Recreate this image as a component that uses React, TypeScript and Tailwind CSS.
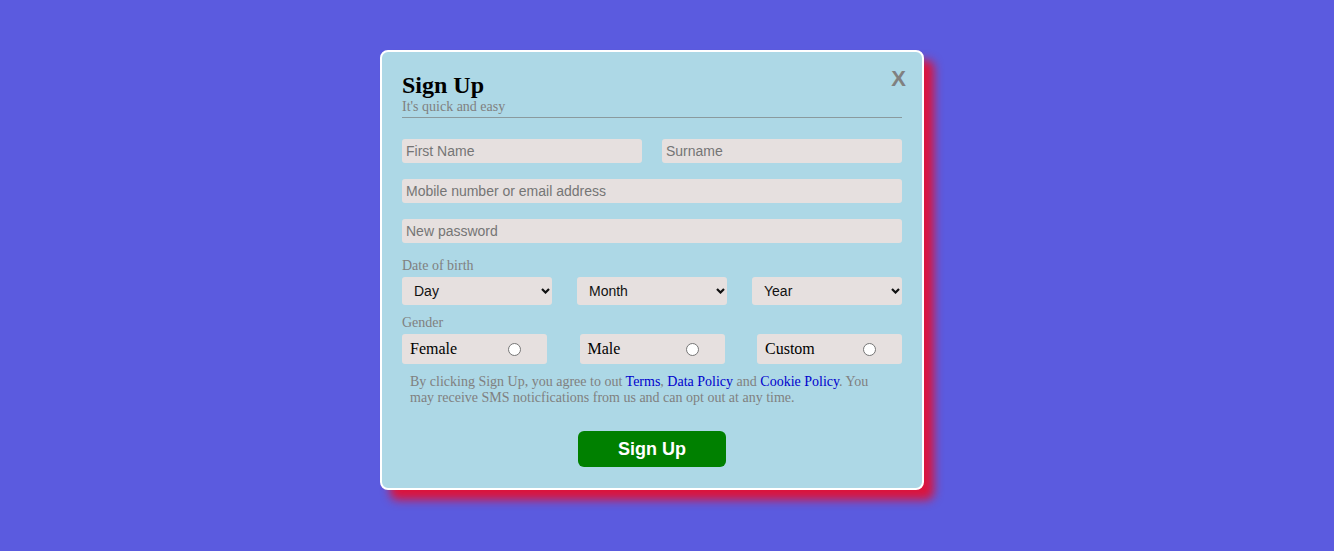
import React from "react";

const Chevron = () => (
  <svg
    className="pointer-events-none absolute right-[2px] top-1/2 -translate-y-1/2"
    width="9"
    height="6"
    viewBox="0 0 9 6"
  >
    <path d="M1 1 L4.5 4.5 L8 1" stroke="#111" strokeWidth="2.2" fill="none" />
  </svg>
);

function Select({ label }: { label: string }) {
  return (
    <div className="relative w-[150px] h-[28px]">
      <select
        className="appearance-none w-full h-full rounded-[3px] bg-[#e6e0df] pl-[12px] text-[14px] text-[#111] outline-none"
        style={{ fontFamily: '"Liberation Sans", Arial, sans-serif' }}
        defaultValue={label}
      >
        <option>{label}</option>
      </select>
      <Chevron />
    </div>
  );
}

function Gender({ label }: { label: string }) {
  return (
    <label className="flex h-[30px] w-[145px] items-center justify-between rounded-[3px] bg-[#e6e0df] pl-[8px] pr-[26px] text-[16px] text-black">
      <span>{label}</span>
      <span className="block h-[13px] w-[13px] rounded-full border border-[#767676] bg-white" />
    </label>
  );
}

export default function App() {
  const sans = { fontFamily: '"Liberation Sans", Arial, sans-serif' };
  return (
    <div
      className="min-h-[551px] w-full bg-[#5b5bdf] flex pl-[380px] pt-[50px]"
      style={{ fontFamily: '"Liberation Serif", "Times New Roman", serif' }}
    >
      <div className="w-[544px] h-[440px] rounded-[8px] border-2 border-white bg-[#add8e6] p-[20px] shadow-[10px_10px_10px_#dc143c] flex flex-col">
        <div className="flex justify-between">
          <div>
            <h2 className="text-[24px] leading-[27px] font-bold text-black">Sign Up</h2>
            <p className="text-[14px] leading-[16px] text-[#808080]">It's quick and easy</p>
          </div>
          <span
            className="-mr-[4px] mt-[-7px] text-[22px] leading-[27px] font-bold text-[#808080]"
            style={sans}
          >
            X
          </span>
        </div>
        <div className="mt-[2px] h-px bg-[#8a9a9e]" />

        <div className="mt-[21px] flex justify-between">
          <input
            placeholder="First Name"
            className="h-[24px] w-[240px] rounded-[3px] bg-[#e6e0df] px-[4px] text-[14px] outline-none placeholder:text-[#757575]"
            style={sans}
          />
          <input
            placeholder="Surname"
            className="h-[24px] w-[240px] rounded-[3px] bg-[#e6e0df] px-[4px] text-[14px] outline-none placeholder:text-[#757575]"
            style={sans}
          />
        </div>
        <input
          placeholder="Mobile number or email address"
          className="mt-[16px] h-[24px] w-full rounded-[3px] bg-[#e6e0df] px-[4px] text-[14px] outline-none placeholder:text-[#757575]"
          style={sans}
        />
        <input
          placeholder="New password"
          className="mt-[16px] h-[24px] w-full rounded-[3px] bg-[#e6e0df] px-[4px] text-[14px] outline-none placeholder:text-[#757575]"
          style={sans}
        />

        <div className="mt-[15px] text-[14px] leading-[16px] text-[#808080]">Date of birth</div>
        <div className="mt-[3px] flex justify-between">
          <Select label="Day" />
          <Select label="Month" />
          <Select label="Year" />
        </div>

        <div className="mt-[10px] text-[14px] leading-[16px] text-[#808080]">Gender</div>
        <div className="mt-[3px] flex justify-between">
          <Gender label="Female" />
          <Gender label="Male" />
          <Gender label="Custom" />
        </div>

        <p className="mt-[10px] px-[8px] text-[14px] leading-[16px] text-[#808080]">
          By clicking Sign Up, you agree to out{" "}
          <span className="text-[#0000cd]">Terms</span>,{" "}
          <span className="text-[#0000cd]">Data Policy</span> and{" "}
          <span className="text-[#0000cd]">Cookie Policy</span>. You may receive SMS
          noticfications from us and can opt out at any time.
        </p>

        <div className="mt-[25px] flex justify-center">
          <button
            className="h-[36px] w-[148px] rounded-[6px] bg-[#008000] text-[18px] font-bold text-white"
            style={sans}
          >
            Sign Up
          </button>
        </div>
      </div>
    </div>
  );
}
